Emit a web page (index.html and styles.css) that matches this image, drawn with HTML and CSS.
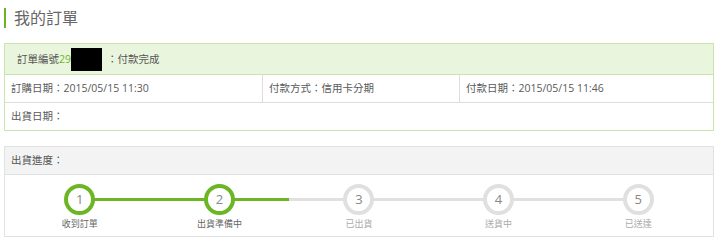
FILE: index.html
```html
<!DOCTYPE html>
<html>
	<head>
		<meta charset="UTF-8">
		<title>我的訂單</title>
		<link rel="stylesheet" href="styles.css">
	</head>
	<body>
		<h2 class="page-title">我的訂單</h2>

		<div class="order-box">
			<div class="order-head">訂單編號<span class="order-no">29</span><span class="mask"></span>：付款完成</div>
			<div class="order-row">
				<div class="cell c1">訂購日期：2015/05/15 11:30</div>
				<div class="cell c2">付款方式：信用卡分期</div>
				<div class="cell c3">付款日期：2015/05/15 11:46</div>
			</div>
			<div class="order-row">
				<div class="cell">出貨日期：</div>
			</div>
		</div>

		<div class="ship-box">
			<div class="ship-head">出貨進度：</div>
			<ul class="steps">
				<li class="step done line-done"><span class="num">1</span><p>收到訂單</p></li>
				<li class="step done line-half"><span class="num">2</span><p>出貨準備中</p></li>
				<li class="step"><span class="num">3</span><p>已出貨</p></li>
				<li class="step"><span class="num">4</span><p>送貨中</p></li>
				<li class="step last"><span class="num">5</span><p>已送達</p></li>
			</ul>
		</div>
	</body>
</html>
```

FILE: styles.css
```css
body{
	margin: 0;
	padding: 8px 6px 0 4px;
	font-family: "Open Sans", "Noto Sans CJK TC", sans-serif;
	color: #666;
	background: #fff;
}
.page-title{
	margin: 0 0 15px 0;
	height: 20px;
	line-height: 20px;
	font-size: 16px;
	font-weight: normal;
	color: #666;
	border-left: 2px solid #6cb524;
	padding-left: 8px;
}
.order-box{
	border: 1px solid #c9e5ac;
	font-size: 10.5px;
}
.order-head{
	height: 30px;
	line-height: 30px;
	background: #eaf5de;
	border-bottom: 1px solid #c9e5ac;
	padding-left: 12px;
	color: #555;
	display: flex;
	align-items: center;
}
.order-no{
	color: #6cb524;
}
.mask{
	display: inline-block;
	width: 31px;
	height: 23px;
	background: #000;
	margin-right: 5px;
}
.order-row{
	display: flex;
	height: 27px;
	line-height: 27px;
}
.order-row + .order-row{
	border-top: 1px solid #ddd;
}
.cell{
	padding-left: 6px;
	color: #5a5a5a;
}
.c1{
	width: 251px;
	border-right: 1px solid #ddd;
}
.c2{
	width: 190px;
	border-right: 1px solid #ddd;
}
.c3{
	flex: 1;
}
.ship-box{
	margin-top: 15px;
	border: 1px solid #e2e2e2;
}
.ship-head{
	height: 27px;
	line-height: 27px;
	background: #f3f3f3;
	border-bottom: 1px solid #e2e2e2;
	padding-left: 6px;
	font-size: 10.5px;
	color: #555;
}
.steps{
	list-style: none;
	margin: 0;
	padding: 9px 5px 0 5px;
	height: 52px;
	display: flex;
}
.step{
	flex: 1;
	position: relative;
	text-align: center;
}
.step::after{
	content: "";
	position: absolute;
	left: 50%;
	width: 100%;
	top: 14px;
	height: 3px;
	background: #e0e0e0;
}
.step.last::after{
	display: none;
}
.line-done::after{
	background: #6cb524;
}
.line-half::after{
	background: linear-gradient(to right, #6cb524 50%, #e0e0e0 50%);
}
.num{
	position: relative;
	z-index: 1;
	display: block;
	margin: 0 auto;
	box-sizing: border-box;
	width: 31px;
	height: 31px;
	line-height: 23px;
	border: 4px solid #e0e0e0;
	border-radius: 50%;
	background: #fff;
	font-size: 13px;
	color: #888;
}
.done .num{
	border-color: #6cb524;
}
.step p{
	margin: 2px 0 0 0;
	line-height: 14px;
	font-size: 9px;
	color: #aaa;
}
.done p{
	color: #666;
}
```
